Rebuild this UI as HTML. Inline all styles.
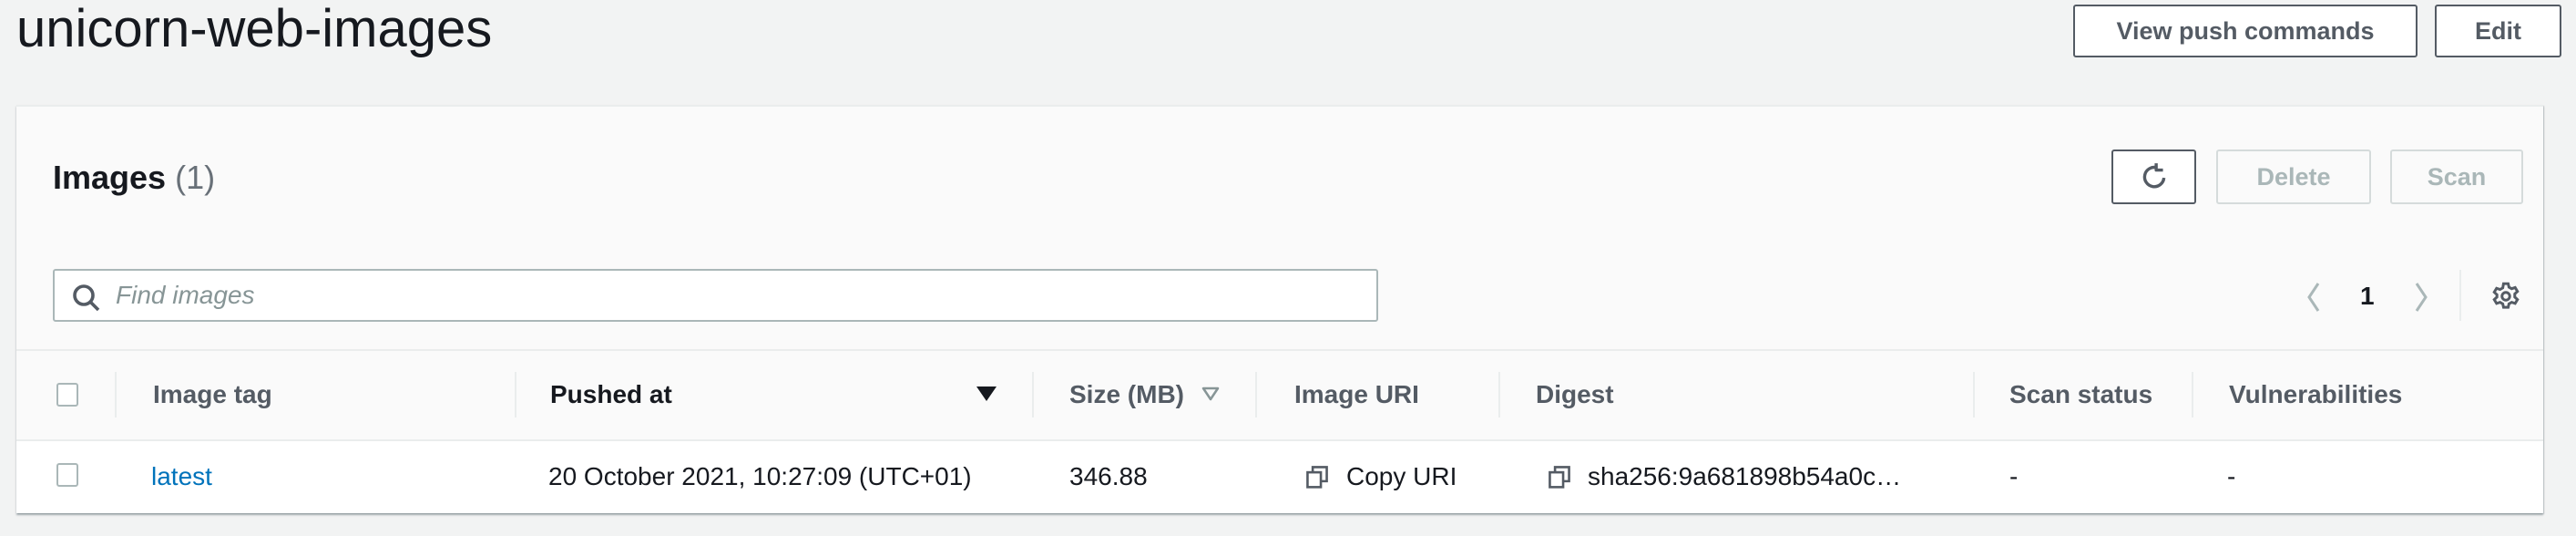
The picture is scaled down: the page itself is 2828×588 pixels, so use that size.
<!DOCTYPE html>
<html><head><meta charset="utf-8"><style>
*{box-sizing:border-box;margin:0;padding:0}
body{width:2828px;height:588px;background:#f2f3f3;font-family:"Liberation Sans",Arial,sans-serif;color:#16191f;position:relative;overflow:hidden}
.a{position:absolute}
.btn{position:absolute;border:2px solid #545b64;border-radius:3px;background:#fff;font-weight:bold;font-size:27px;color:#545b64;display:flex;align-items:center;justify-content:center}
.dis{border-color:#d5dbdb;color:#aab7b8;background:#fafafa}
.th{position:absolute;top:417px;font-size:28px;font-weight:bold;color:#545b64}
.td{position:absolute;top:507px;font-size:28px;color:#16191f}
.vd{position:absolute;top:408px;width:2px;height:50px;background:#eaeded}
.cb{position:absolute;left:62px;width:24px;height:26px;border:2px solid #aab7b8;border-radius:3px;background:#fff}
</style></head><body>
<div class="a" style="left:18px;top:-2px;font-size:58px;line-height:68px">unicorn-web-images</div>
<div class="btn" style="left:2276px;top:5px;width:378px;height:58px">View push commands</div>
<div class="btn" style="left:2673px;top:5px;width:139px;height:58px">Edit</div>

<div class="a" style="left:18px;top:115px;width:2774px;height:448px;background:#fafafa;border-top:2px solid #eaeded;box-shadow:0 2px 2px rgba(0,28,36,.3),1px 1px 1px rgba(0,28,36,.15)"></div>
<div class="a" style="left:58px;top:174px;font-size:36px;font-weight:bold">Images <span style="font-weight:normal;color:#687078">(1)</span></div>
<div class="btn" style="left:2318px;top:164px;width:93px;height:60px"><svg width="34" height="34" viewBox="0 0 16 16" fill="none" stroke="#545b64" stroke-width="1.6"><path d="M13 8.5A5 5 0 1 1 9.5 3.3"/><path d="M9 1v3.5h3.5" stroke-linejoin="round"/></svg></div>
<div class="btn dis" style="left:2433px;top:164px;width:170px;height:60px">Delete</div>
<div class="btn dis" style="left:2624px;top:164px;width:146px;height:60px">Scan</div>

<div class="a" style="left:58px;top:295px;width:1455px;height:58px;background:#fff;border:2px solid #aab7b8;border-radius:3px"></div>
<svg class="a" style="left:78px;top:310px" width="32" height="32" viewBox="0 0 16 16" fill="none" stroke="#545b64" stroke-width="1.8"><circle cx="7" cy="7" r="5"/><path d="M10.5 10.5L15 15"/></svg>
<div class="a" style="left:127px;top:308px;font-size:28px;font-style:italic;color:#879596">Find images</div>

<svg class="a" style="left:2530px;top:308px" width="20" height="36" viewBox="0 0 20 36"><path d="M15 3L5 18l10 15" fill="none" stroke="#aab7b8" stroke-width="3"/></svg>
<div class="a" style="left:2591px;top:309px;font-size:28px;font-weight:bold">1</div>
<svg class="a" style="left:2648px;top:308px" width="20" height="36" viewBox="0 0 20 36"><path d="M5 3l10 15L5 33" fill="none" stroke="#aab7b8" stroke-width="3"/></svg>
<div class="a" style="left:2700px;top:296px;width:2px;height:56px;background:#eaeded"></div>
<svg class="a" style="left:2734px;top:308px" width="34" height="34" viewBox="0 0 16 16" fill="none" stroke="#545b64" stroke-width="1.4"><circle cx="8" cy="8" r="2"/><path d="M6.8 1.5h2.4l.4 1.8 1.4.8 1.8-.6 1.2 2-1.4 1.3v1.6l1.4 1.3-1.2 2-1.8-.6-1.4.8-.4 1.8H6.8l-.4-1.8-1.4-.8-1.8.6-1.2-2 1.4-1.3V7.2L2 5.9l1.2-2 1.8.6 1.4-.8z"/></svg>

<div class="a" style="left:18px;top:383px;width:2774px;height:2px;background:#eaeded"></div>
<div class="a" style="left:18px;top:482px;width:2774px;height:2px;background:#eaeded"></div>
<div class="a" style="left:18px;top:484px;width:2774px;height:78px;background:#fff"></div>

<div class="cb" style="top:420px"></div>
<div class="vd" style="left:126px"></div>
<div class="th" style="left:168px">Image tag</div>
<div class="vd" style="left:565px"></div>
<div class="th" style="left:604px;color:#16191f">Pushed at</div>
<div class="a" style="left:1072px;top:424px;width:0;height:0;border-left:11px solid transparent;border-right:11px solid transparent;border-top:16px solid #16191f"></div>
<div class="vd" style="left:1133px"></div>
<div class="th" style="left:1174px">Size (MB)</div>
<svg class="a" style="left:1318px;top:423px" width="22" height="18" viewBox="0 0 22 18"><path d="M3 3h16L11 15z" fill="none" stroke="#879596" stroke-width="2.5" stroke-linejoin="round"/></svg>
<div class="vd" style="left:1378px"></div>
<div class="th" style="left:1421px">Image URI</div>
<div class="vd" style="left:1645px"></div>
<div class="th" style="left:1686px">Digest</div>
<div class="vd" style="left:2166px"></div>
<div class="th" style="left:2206px">Scan status</div>
<div class="vd" style="left:2406px"></div>
<div class="th" style="left:2447px">Vulnerabilities</div>

<div class="cb" style="top:508px"></div>
<div class="td" style="left:166px;color:#0073bb">latest</div>
<div class="td" style="left:602px">20 October 2021, 10:27:09 (UTC+01)</div>
<div class="td" style="left:1174px">346.88</div>
<svg class="a" style="left:1433px;top:509px" width="26" height="28" viewBox="0 0 16 16" fill="none" stroke="#545b64" stroke-width="1.6"><rect x="1.5" y="5" width="9" height="10"/><path d="M5 5V1.5h9.5V11H10.5"/></svg>
<div class="td" style="left:1478px">Copy URI</div>
<svg class="a" style="left:1699px;top:509px" width="26" height="28" viewBox="0 0 16 16" fill="none" stroke="#545b64" stroke-width="1.6"><rect x="1.5" y="5" width="9" height="10"/><path d="M5 5V1.5h9.5V11H10.5"/></svg>
<div class="td" style="left:1743px">sha256:9a681898b54a0c…</div>
<div class="td" style="left:2206px">-</div>
<div class="td" style="left:2445px">-</div>
</body></html>
